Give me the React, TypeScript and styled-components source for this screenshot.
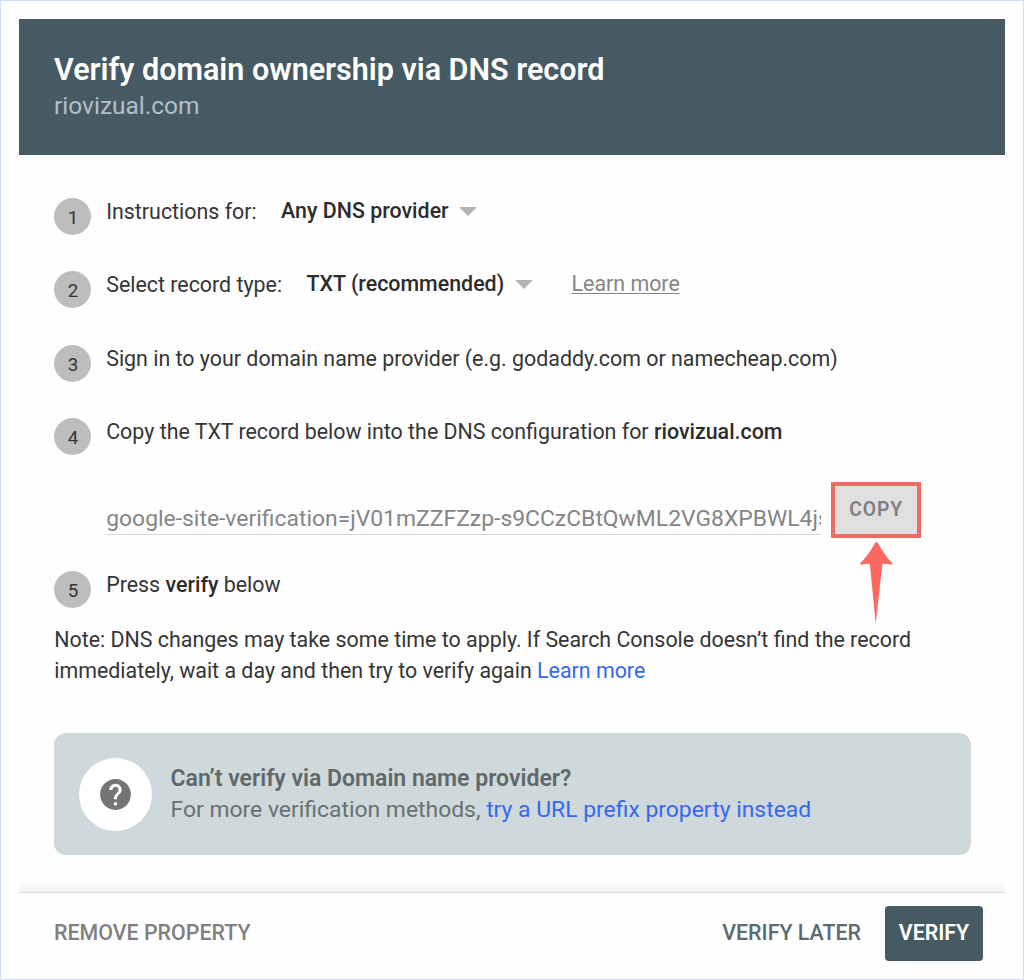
import React from "react";
import styled, { createGlobalStyle } from "styled-components";

const GlobalStyle = createGlobalStyle`
  *, *::before, *::after { box-sizing: border-box; }
  body { margin: 0; background: #fefefe; font-family: Roboto, "Liberation Sans", sans-serif; }
  button { font-family: inherit; cursor: pointer; }
`;

const Frame = styled.div`
  display: flex;
  flex-direction: column;
  width: 1024px;
  height: 980px;
  padding: 18px;
  border: 1px solid #cfdff5;
  background: #fefefe;
  color: #353535;
  font-size: 21.4px;
  line-height: 30px;
  overflow: hidden;
`;

const Header = styled.header`
  flex: none;
  height: 136px;
  padding: 33px 35px 0;
  background: #465a63;
`;

const Title = styled.h1`
  margin: 0;
  color: #fff;
  font-size: 30.5px;
  font-weight: 600;
  line-height: 36px;
  white-space: nowrap;
`;

const Domain = styled.div`
  color: #b3bfc8;
  font-size: 24.5px;
  line-height: 36px;
`;

const Content = styled.main`
  flex: none;
  height: 737px;
  padding: 43px 34px 0 35px;
`;

const Steps = styled.ol`
  display: grid;
  grid-template-rows: 73px 74px 73px 153px 53px;
  margin: 0;
  padding: 0;
  list-style: none;
`;

const Step = styled.li`
  display: grid;
  grid-template-columns: 37px 1fr;
  column-gap: 15.2px;
  align-items: start;
  line-height: 28px;
  white-space: nowrap;
`;

const StepNumber = styled.span`
  display: grid;
  place-items: center;
  width: 37px;
  height: 37px;
  padding: 2px 0 0 1px;
  border-radius: 50%;
  background: #bdbdbd;
  font-size: 18.8px;
`;

const StepLine = styled.div`
  display: flex;
  align-items: flex-start;
`;

const Strong = styled.b`
  font-weight: 500;
  color: #2c2c2c;
`;

const Select = styled.button`
  display: flex;
  align-items: center;
  gap: 10.4px;
  margin: 0 0 0 24.4px;
  padding: 0;
  border: 0;
  background: none;
  color: #2c2c2c;
  font-size: 21.4px;
  font-weight: 500;
  line-height: 25px;
`;

const Caret = styled.svg`
  width: 18px;
  height: 9px;
  margin-top: 2px;
  fill: #b3b3b3;
`;

const MutedLink = styled.a`
  margin-left: 39px;
  color: #858585;
  line-height: 25px;
  text-decoration: underline;
  text-decoration-thickness: 1px;
  text-underline-offset: 2px;
`;

const RecordRow = styled.div`
  display: flex;
  align-items: flex-start;
  gap: 10px;
  margin-top: 36px;
`;

const RecordField = styled.div`
  width: 715px;
  height: 38px;
  margin-top: 15px;
  padding-top: 8px;
  border-bottom: 1px solid #d6d6d6;
  color: #858585;
  font-size: 22.9px;
  overflow: hidden;
`;

const CopyArea = styled.div`
  position: relative;
`;

const CopyButton = styled.button`
  width: 90px;
  height: 56px;
  padding: 0 0 2px;
  border: 4px solid #ed6d66;
  background: #e0e0e0;
  color: #808080;
  font-size: 19.3px;
  font-weight: 600;
  letter-spacing: 0.9px;
`;

const Pointer = styled.svg`
  position: absolute;
  top: 60px;
  left: 29px;
  width: 33px;
  height: 82px;
  fill: #fd6961;
`;

const Note = styled.p`
  margin: 0;
  padding-left: 0.2px;
  line-height: 31px;
  white-space: nowrap;
`;

const Link = styled.a`
  color: #3468f0;
  text-decoration: none;
`;

const HelpCard = styled.aside`
  display: flex;
  align-items: center;
  gap: 18.5px;
  height: 122px;
  margin-top: 47px;
  padding: 0 25px;
  border-radius: 12px;
  background: #cfd8da;
  color: #687073;
  line-height: 31px;
  white-space: nowrap;
`;

const HelpBadge = styled.div`
  display: grid;
  place-items: center;
  width: 73px;
  height: 73px;
  border-radius: 50%;
  background: #fff;
`;

const HelpIcon = styled.svg`
  width: 37px;
  height: 37px;
  fill: #757575;
`;

const HelpTitle = styled.div`
  color: #5f686b;
  font-size: 23px;
  font-weight: 600;
`;

const HelpText = styled.div`
  font-size: 22.9px;
`;

const FooterEdge = styled.div`
  flex: none;
  height: 10px;
  margin-top: -9px;
  border-bottom: 1px solid #dcdcdc;
  background: linear-gradient(#fefefe, #f1f1f1);
`;

const Footer = styled.footer`
  display: flex;
  align-items: flex-start;
  height: 68px;
  padding: 13px 22px 0 35px;
`;

const FlatButton = styled.button<{ $color: string; $push?: boolean }>`
  height: 52px;
  margin-left: ${(p) => (p.$push ? "auto" : "0")};
  padding: 0;
  border: 0;
  background: none;
  color: ${(p) => p.$color};
  font-size: 21.4px;
  font-weight: 500;
`;

const PrimaryButton = styled.button`
  width: 98px;
  height: 55px;
  margin-left: 24px;
  padding: 0 0 3px;
  border: 0;
  border-radius: 4px;
  background: #465a63;
  color: #fff;
  font-size: 21.3px;
  font-weight: 600;
`;

const DownCaret = () => (
  <Caret viewBox="0 0 18 9" aria-hidden="true">
    <path d="M0 0h18L9 9z" />
  </Caret>
);

export default function App() {
  return (
    <>
      <GlobalStyle />
      <Frame>
        <Header>
          <Title>Verify domain ownership via DNS record</Title>
          <Domain>riovizual.com</Domain>
        </Header>
        <Content>
          <Steps>
            <Step>
              <StepNumber>1</StepNumber>
              <StepLine>
                <span>Instructions for:</span>
                <Select>
                  Any DNS provider
                  <DownCaret />
                </Select>
              </StepLine>
            </Step>
            <Step>
              <StepNumber>2</StepNumber>
              <StepLine>
                <span>Select record type:</span>
                <Select>
                  TXT (recommended)
                  <DownCaret />
                </Select>
                <MutedLink>Learn more</MutedLink>
              </StepLine>
            </Step>
            <Step>
              <StepNumber>3</StepNumber>
              <div>Sign in to your domain name provider (e.g. godaddy.com or namecheap.com)</div>
            </Step>
            <Step>
              <StepNumber>4</StepNumber>
              <div>
                <div>
                  Copy the TXT record below into the DNS configuration for <Strong>riovizual.com</Strong>
                </div>
                <RecordRow>
                  <RecordField>google-site-verification=jV01mZZFZzp-s9CCzCBtQwML2VG8XPBWL4js</RecordField>
                  <CopyArea>
                    <CopyButton>COPY</CopyButton>
                    <Pointer viewBox="0 0 33 82" aria-hidden="true">
                      <path d="M16.500 0Q17.500 0 18.500 2Q24.500 13 32 21Q33 23 31 22.800Q26.500 21.500 22.500 21.800L15.700 81.500 9.800 21.800Q6 21.500 1.500 22.800Q-.5 23 .5 21Q8.500 13 14.500 2Q15.500 0 16.500 0z" />
                    </Pointer>
                  </CopyArea>
                </RecordRow>
              </div>
            </Step>
            <Step>
              <StepNumber>5</StepNumber>
              <div>
                Press <Strong>verify</Strong> below
              </div>
            </Step>
          </Steps>
          <Note>
            Note: DNS changes may take some time to apply. If Search Console doesn’t find the record
            <br />
            immediately, wait a day and then try to verify again <Link>Learn more</Link>
          </Note>
          <HelpCard>
            <HelpBadge>
              <HelpIcon viewBox="0 0 24 24" aria-hidden="true">
                <path d="M12 2C6.480 2 2 6.480 2 12s4.480 10 10 10 10-4.480 10-10S17.520 2 12 2zm1 17h-2v-2h2v2zm2.070-7.750l-.9.920C13.450 12.900 13 13.500 13 15h-2v-.5c0-1.100.45-2.100 1.170-2.830l1.240-1.260c.37-.36.59-.86.59-1.410 0-1.100-.9-2-2-2s-2 .9-2 2H8c0-2.210 1.790-4 4-4s4 1.790 4 4c0 .88-.36 1.680-.93 2.250z" />
              </HelpIcon>
            </HelpBadge>
            <div>
              <HelpTitle>Can’t verify via Domain name provider?</HelpTitle>
              <HelpText>
                For more verification methods, <Link>try a URL prefix property instead</Link>
              </HelpText>
            </div>
          </HelpCard>
        </Content>
        <FooterEdge />
        <Footer>
          <FlatButton $color="#808080">REMOVE PROPERTY</FlatButton>
          <FlatButton $color="#5a6b72" $push>
            VERIFY LATER
          </FlatButton>
          <PrimaryButton>VERIFY</PrimaryButton>
        </Footer>
      </Frame>
    </>
  );
}
